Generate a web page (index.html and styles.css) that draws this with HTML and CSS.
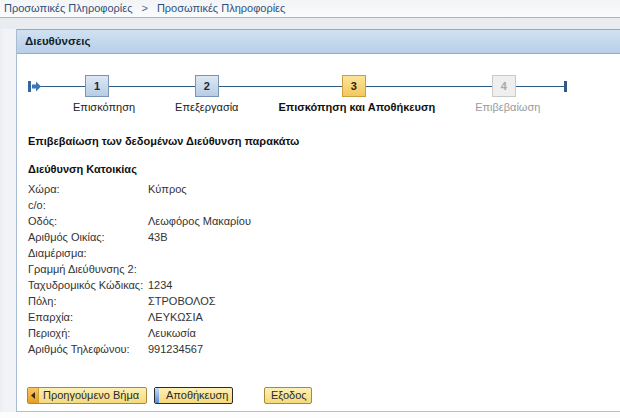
FILE: index.html
```html
<!DOCTYPE html>
<html lang="el">
<head>
<meta charset="utf-8">
<title>Διευθύνσεις</title>
<link rel="stylesheet" href="styles.css">
</head>
<body>
<div class="crumbs"><a>Προσωπικές Πληροφορίες</a><span class="sep">&gt;</span><a>Προσωπικές Πληροφορίες</a></div>
<div class="stage">
  <div class="gutter"></div>
  <div class="panel">
    <div class="panel-head">Διευθύνσεις</div>
    <div class="panel-body">
      <div class="roadmap">
        <div class="rm-start">
          <svg width="13" height="11" viewBox="0 0 13 11"><rect x="0" y="0" width="3" height="11" fill="#3466a0"/><path d="M4 3.5h4V0.5l5 5-5 5v-3H4z" fill="#3f77b5"/></svg>
        </div>
        <div class="steps">
          <div class="step s1"><div class="box done">1</div><div class="lbl">Επισκόπηση</div></div>
          <div class="step s2"><div class="box done">2</div><div class="lbl">Επεξεργασία</div></div>
          <div class="step s3"><div class="box cur">3</div><div class="lbl cur-lbl">Επισκόπηση και Αποθήκευση</div></div>
          <div class="step s4"><div class="box todo">4</div><div class="lbl todo-lbl">Επιβεβαίωση</div></div>
        </div>
        <div class="rm-end"></div>
      </div>
      <h1 class="title">Επιβεβαίωση των δεδομένων Διεύθυνση παρακάτω</h1>
      <h2 class="subtitle">Διεύθυνση Κατοικίας</h2>
      <div class="fields">
        <div class="k">Χώρα:</div><div class="v">Κύπρος</div>
        <div class="k">c/o:</div><div class="v"></div>
        <div class="k">Οδός:</div><div class="v">Λεωφόρος Μακαρίου</div>
        <div class="k">Αριθμός Οικίας:</div><div class="v">43B</div>
        <div class="k">Διαμέρισμα:</div><div class="v"></div>
        <div class="k">Γραμμή Διεύθυνσης 2:</div><div class="v"></div>
        <div class="k">Ταχυδρομικός Κώδικας:</div><div class="v">1234</div>
        <div class="k">Πόλη:</div><div class="v">ΣΤΡΟΒΟΛΟΣ</div>
        <div class="k">Επαρχία:</div><div class="v">ΛΕΥΚΩΣΙΑ</div>
        <div class="k">Περιοχή:</div><div class="v">Λευκωσία</div>
        <div class="k">Αριθμός Τηλεφώνου:</div><div class="v">991234567</div>
      </div>
      <div class="actions">
        <button class="btn back"><span class="cap"><svg width="4" height="7" viewBox="0 0 4 7"><path d="M4 0v7L0 3.5z" fill="#3a2a10"/></svg></span>Προηγούμενο Βήμα</button>
        <button class="btn save"><span class="cap blue"></span>Αποθήκευση</button>
        <button class="btn exit">Εξοδος</button>
      </div>
    </div>
  </div>
</div>
</body>
</html>
```
FILE: styles.css
```css
html, body { margin: 0; padding: 0; }
body {
  width: 620px;
  height: 418px;
  overflow: hidden;
  background: #fdfdfe;
  font-family: "Liberation Sans", Arial, sans-serif;
  font-size: 11px;
  color: #333;
}
.crumbs {
  height: 17px;
  line-height: 16px;
  padding-left: 4px;
  background: linear-gradient(#f3f4f6, #fbfbfc);
  border-bottom: 1px solid #aab5c1;
  color: #2d4f7c;
  white-space: nowrap;
}
.crumbs .sep { margin: 0 9px 0 9px; color: #4a6a90; }
.stage {
  display: flex;
  background: linear-gradient(#eaecef 0, #e8edf3 11px, #f3f4f6 11px);
  padding-top: 11px;
}
.gutter {
  width: 16px;
  flex: none;
  box-sizing: border-box;
  border-left: 3px solid #eeeff2;
  background: #f2f3f6;
}
.panel {
  flex: 1;
  border-left: 1px solid #a9bbd0;
  border-bottom: 1px solid #a9c1dc;
  background: #fff;
}
.panel-head {
  height: 23px;
  line-height: 23px;
  padding-left: 8px;
  border-top: 1px solid #97a6b8;
  border-bottom: 1px solid #9babbc;
  background: linear-gradient(#d1e1f1, #b8cfe8);
  font-weight: bold;
  font-size: 11.5px;
  color: #141e2a;
}
.panel-body {
  padding: 0 0 7px 10px;
}
.roadmap {
  position: relative;
  display: flex;
  align-items: flex-start;
  padding-top: 21px;
  height: 39px;
  width: 541px;
}
.roadmap::before {
  content: "";
  position: absolute;
  left: 9px;
  width: 530px;
  top: 32px;
  height: 1px;
  background: #2f5a86;
}
.rm-start { position: relative; margin-top: 6px; margin-left: 1px; height: 11px; }
.rm-start svg { display: block; }
.rm-end {
  position: absolute;
  left: 537px;
  top: 27px;
  width: 3px;
  height: 11px;
  background: #2f5a86;
}
.steps {
  position: relative;
  display: flex;
  gap: 40px;
  margin-left: 32px;
}
.step {
  display: flex;
  flex-direction: column;
  align-items: center;
}
.box {
  width: 22px;
  height: 20px;
  line-height: 20px;
  text-align: center;
  font-size: 11px;
  font-weight: bold;
  color: #1e2a36;
}
.s1 .box { margin-right: 14px; }
.s3 .box { margin-right: 6px; }
.s4 .box { margin-right: 8px; }
.box.done { border: 1px solid #7895b4; background: linear-gradient(#dde8f4, #b7cde4); }
.box.cur { border: 1px solid #c9a03e; background: linear-gradient(#fbe49a, #f3c85e); color: #2a2210; }
.box.todo { border: 1px solid #c9c9c9; background: #efefef; color: #a9a9a9; }
.lbl {
  margin-top: 3px;
  line-height: 14px;
  color: #222;
  white-space: nowrap;
}
.cur-lbl { font-weight: bold; color: #111; }
.todo-lbl { color: #9a9a9a; }
.title {
  margin: 19px 0 0 1px;
  font-size: 11px;
  line-height: 16px;
  font-weight: bold;
  color: #111;
}
.subtitle {
  margin: 12px 0 0 1px;
  font-size: 11px;
  line-height: 16px;
  font-weight: bold;
  color: #111;
}
.fields {
  display: grid;
  grid-template-columns: 120px auto;
  grid-auto-rows: 16px;
  line-height: 16px;
  margin: 4px 0 0 1px;
  color: #333;
  white-space: nowrap;
}
.actions {
  display: flex;
  margin-top: 30px;
  height: 17px;
}
.btn {
  display: flex;
  align-items: center;
  height: 17px;
  padding: 0 5px 0 4px;
  margin: 0;
  border: 1px solid #a88a3a;
  border-radius: 2px;
  background: linear-gradient(#fdf0b8, #f5d97a);
  font-family: "Liberation Sans", Arial, sans-serif;
  font-size: 11px;
  color: #2a2a2a;
  line-height: 15px;
  box-sizing: border-box;
  white-space: nowrap;
}
.btn .cap {
  display: flex;
  align-items: center;
  justify-content: center;
  align-self: stretch;
  width: 10px;
  flex: none;
  margin: 0 4px 0 -4px;
  background: linear-gradient(#f8c860, #eb9c20);
  border-right: 1px solid #d09a38;
}
.btn .cap.blue {
  width: 4px;
  margin: 0 7px 0 -4px;
  background: linear-gradient(#c4dcf6, #5a8ed0);
  border-right: none;
}
.btn.back { width: 120px; }
.btn.save { width: 79px; margin-left: 7px; border-color: #2b2b2b; }
.btn.exit { width: 48px; margin-left: 31px; padding-left: 6px; }
```
